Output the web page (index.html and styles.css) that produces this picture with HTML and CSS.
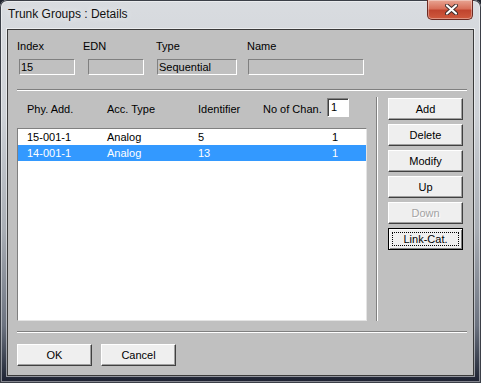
FILE: index.html
```html
<!DOCTYPE html>
<html lang="en">
<head>
    <meta charset="UTF-8">
    <meta name="viewport" content="width=device-width, initial-scale=1.0">
    <title>Trunk Groups : Details</title>
    <link rel="stylesheet" href="styles.css">
</head>
<body>
    <div class="window">
        <div class="titlebar">
            <span class="title">Trunk Groups : Details</span>
            <button class="close-btn" title="Close">
                <svg width="13" height="11" viewBox="0 0 13 11">
                    <path d="M2 1.5 L11 9.5 M11 1.5 L2 9.5" stroke="#3a2a2a" stroke-width="4" stroke-linecap="round"/>
                    <path d="M2 1.5 L11 9.5 M11 1.5 L2 9.5" stroke="#ffffff" stroke-width="2.2" stroke-linecap="round"/>
                </svg>
            </button>
        </div>

        <div class="client">
            <div class="fields">
                <div class="field f-index">
                    <label>Index</label>
                    <div class="box">15</div>
                </div>
                <div class="field f-edn">
                    <label>EDN</label>
                    <div class="box"></div>
                </div>
                <div class="field f-type">
                    <label>Type</label>
                    <div class="box">Sequential</div>
                </div>
                <div class="field f-name">
                    <label>Name</label>
                    <div class="box"></div>
                </div>
            </div>

            <div class="sep"></div>

            <div class="middle">
                <div class="list-col">
                    <div class="list-head">
                        <span class="c1">Phy. Add.</span>
                        <span class="c2">Acc. Type</span>
                        <span class="c3">Identifier</span>
                        <span class="c4">No of Chan.</span>
                        <div class="chan-input">1</div>
                    </div>
                    <div class="list">
                        <div class="row">
                            <span class="c1">15-001-1</span>
                            <span class="c2">Analog</span>
                            <span class="c3">5</span>
                            <span class="c4">1</span>
                        </div>
                        <div class="row selected">
                            <span class="c1">14-001-1</span>
                            <span class="c2">Analog</span>
                            <span class="c3">13</span>
                            <span class="c4">1</span>
                        </div>
                    </div>
                </div>

                <div class="vsep"></div>

                <div class="side-buttons">
                    <button class="btn">Add</button>
                    <button class="btn">Delete</button>
                    <button class="btn">Modify</button>
                    <button class="btn">Up</button>
                    <button class="btn" disabled>Down</button>
                    <button class="btn focused">Link-Cat.</button>
                </div>
            </div>

            <div class="sep bottom"></div>

            <div class="footer">
                <button class="btn">OK</button>
                <button class="btn">Cancel</button>
            </div>
        </div>
    </div>
</body>
</html>
```

FILE: styles.css
```css
body {
    margin: 0;
    width: 481px;
    height: 383px;
    overflow: hidden;
    background: #20242e;
    font-family: 'Liberation Sans', Arial, sans-serif;
    font-size: 11px;
    color: #000;
}

.window {
    width: 481px;
    height: 383px;
    box-sizing: border-box;
    border-radius: 7px 7px 0 0;
    background: linear-gradient(to bottom, #d9dce0 0%, #cdd1d6 30%, #a9aeb5 60%, #6c7380 85%, #2b3140 97%, #1c2030 100%);
    box-shadow: inset 0 0 0 1px #3b3f47, inset 0 0 0 2px rgba(255, 255, 255, 0.45);
}

/* Title bar */
.titlebar {
    height: 29px;
    display: flex;
    align-items: flex-start;
}

.title {
    padding-left: 8px;
    line-height: 29px;
    font-size: 12px;
    color: #111;
    text-shadow: 0 0 6px rgba(255, 255, 255, 0.9);
}

.close-btn {
    margin-left: auto;
    margin-right: 8px;
    width: 46px;
    height: 20px;
    padding: 0;
    border: 1px solid #6b2a22;
    border-top: none;
    border-radius: 0 0 5px 5px;
    background: linear-gradient(to bottom, #e8a593 0%, #d8705a 45%, #c0442e 55%, #cf5a3e 100%);
    box-shadow: inset 0 0 0 1px rgba(255, 255, 255, 0.35);
    display: flex;
    align-items: center;
    justify-content: center;
}

.close-btn svg {
    display: block;
    margin-left: 2px;
}

/* Client area */
.client {
    margin: 0 7px;
    width: 467px;
    height: 347px;
    box-sizing: border-box;
    border: 1px solid #3a3a3a;
    background: #c0c0c0;
    box-shadow: 0 0 0 1px rgba(255, 255, 255, 0.5);
}

.fields {
    display: flex;
    margin-top: 10px;
    padding-left: 9px;
}

.field label {
    display: block;
    line-height: 13px;
    height: 13px;
    margin-bottom: 6px;
}

.f-index { width: 66px; }
.f-edn { width: 73px; }
.f-type { width: 91px; }

.box {
    height: 16px;
    box-sizing: border-box;
    border: 1px solid;
    border-color: #808080 #ffffff #ffffff #808080;
    line-height: 14px;
    padding-left: 1px;
    background: #c0c0c0;
}

.f-index .box { margin-left: 2px; width: 56px; }
.f-edn .box { margin-left: 5px; width: 56px; }
.f-type .box { margin-left: 1px; width: 80px; }
.f-name .box { margin-left: 1px; width: 116px; }

.sep {
    margin-top: 14px;
    margin-left: 9px;
    width: 450px;
    border-top: 1px solid #808080;
    border-bottom: 1px solid #ffffff;
}

/* Middle: list and side buttons */
.middle {
    display: flex;
    padding-left: 9px;
}

.list-col {
    width: 350px;
}

.list-head {
    display: flex;
    margin-top: 7px;
    height: 19px;
    padding-left: 10px;
}

.list-head span {
    padding-top: 5px;
    line-height: 13px;
}

.c1 { width: 80px; flex: none; }
.c2 { width: 91px; flex: none; }
.c3 { width: 65px; flex: none; }
.list-head .c4 { width: 64px; flex: none; }

.chan-input {
    width: 22px;
    height: 19px;
    box-sizing: border-box;
    border: 1px solid;
    border-color: #808080 #ffffff #ffffff #808080;
    box-shadow: inset 1px 1px #404040;
    background: #fff;
    line-height: 17px;
    padding-left: 3px;
}

.list {
    margin-top: 11px;
    height: 193px;
    box-sizing: border-box;
    background: #fff;
    border: 1px solid;
    border-color: #808080 #e4e4e4 #e4e4e4 #808080;
}

.row {
    display: flex;
    height: 16px;
    line-height: 16px;
    padding-left: 9px;
}

.row .c4 {
    padding-left: 69px;
}

.row.selected {
    background: #3399ff;
    color: #fff;
}

.vsep {
    margin-left: 9px;
    margin-top: 6px;
    height: 224px;
    border-left: 1px solid #808080;
    border-right: 1px solid #ffffff;
}

.side-buttons {
    display: flex;
    flex-direction: column;
    gap: 4px;
    margin-left: 10px;
    margin-top: 7px;
}

/* Classic buttons */
.btn {
    position: relative;
    width: 75px;
    height: 22px;
    padding: 0;
    font-family: 'Liberation Sans', Arial, sans-serif;
    font-size: 11px;
    font-weight: normal;
    color: #000;
    background: #efefef;
    border: 1px solid;
    border-color: #ffffff #404040 #404040 #ffffff;
    box-shadow: inset -1px -1px #a0a0a0;
}

.btn:disabled {
    color: #a3a3a3;
    text-shadow: 1px 1px #ffffff;
}

.btn.focused {
    border-color: #000;
    box-shadow: inset 1px 1px #ffffff, inset -1px -1px #808080;
}

.btn.focused::after {
    content: '';
    position: absolute;
    top: 3px;
    left: 3px;
    right: 3px;
    bottom: 3px;
    border: 1px dotted #000;
}

.sep.bottom {
    margin-top: 10px;
}

.footer {
    display: flex;
    gap: 9px;
    margin-top: 11px;
    padding-left: 9px;
}
```
